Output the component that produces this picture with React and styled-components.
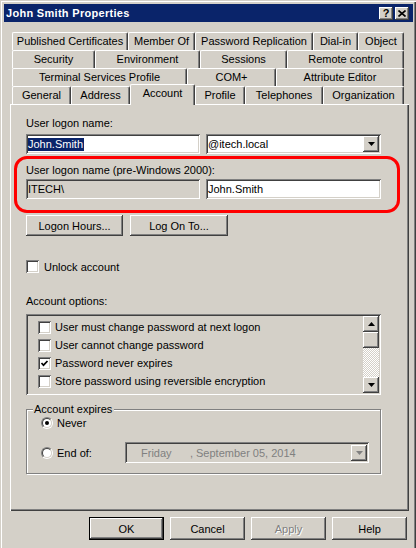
import React from 'react';
import styled, { createGlobalStyle, css } from 'styled-components';

const GlobalStyle = createGlobalStyle`
  html, body {
    margin: 0;
    padding: 0;
    background: #d4d0c8;
  }
  body {
    font-family: "Liberation Sans", Arial, sans-serif;
    font-size: 11px;
    color: #000;
  }
`;

const raised = css`
  box-shadow: inset -1px -1px #404040, inset 1px 1px #fff, inset -2px -2px #808080, inset 2px 2px #d4d0c8;
`;

const sunken = css`
  box-shadow: inset 1px 1px #808080, inset -1px -1px #fff, inset 2px 2px #404040, inset -2px -2px #d4d0c8;
`;

const Window = styled.div`
  width: 416px;
  height: 548px;
  overflow: hidden;
  box-sizing: border-box;
  padding: 1px 0 0 1px;
`;

const Frame = styled.div`
  height: 100%;
  box-sizing: border-box;
  padding: 3px 3px 0 3px;
  box-shadow: inset 1px 1px #fff, inset -1px 0 #404040, inset -2px 0 #808080;
`;

const TitleBar = styled.div`
  height: 18px;
  background: #0a246a;
  display: flex;
  align-items: center;
  padding: 0 4px 0 2px;
  color: #fff;
  font-weight: bold;
  letter-spacing: 0.3px;
`;

const TitleText = styled.span`
  flex: 1;
`;

const CaptionButton = styled.div`
  width: 14px;
  height: 13px;
  margin-left: 2px;
  background: #d4d0c8;
  ${raised};
  display: flex;
  align-items: center;
  justify-content: center;
  color: #000;
  font-size: 11px;
  font-weight: bold;
  letter-spacing: 0;
  line-height: 1;
`;

const Body = styled.div`
  padding: 10px 0 0 6px;
`;

const TabStrip = styled.div`
  margin-left: 2px;
  width: 392px;
`;

const TabRow = styled.div`
  display: flex;
  height: 18px;
  align-items: flex-start;
`;

const Tab = styled.div`
  box-sizing: border-box;
  height: ${(p) => (p.$active ? '21px' : '18px')};
  margin-top: ${(p) => (p.$active ? '-2px' : '0')};
  position: ${(p) => (p.$active ? 'relative' : 'static')};
  z-index: ${(p) => (p.$active ? 2 : 'auto')};
  background: #d4d0c8;
  border-top: 1px solid #fff;
  border-left: 1px solid #fff;
  border-right: 1px solid #404040;
  border-radius: 2px 2px 0 0;
  box-shadow: inset -1px 0 #808080;
  display: flex;
  justify-content: center;
  padding-top: 2px;
  white-space: nowrap;
`;

const Panel = styled.div`
  width: 399px;
  height: 407px;
  box-sizing: border-box;
  padding: 13px 0 0 16px;
  position: relative;
  box-shadow: inset 1px 1px #fff, inset -1px -1px #404040, inset -2px -2px #808080;
`;

const Label = styled.div`
  height: 13px;
  line-height: 13px;
  margin-top: ${(p) => p.$top || 0}px;
`;

const FieldRow = styled.div`
  display: flex;
  gap: 6px;
  margin-top: ${(p) => p.$top || 0}px;
`;

const TextBox = styled.div`
  box-sizing: border-box;
  width: ${(p) => p.$w}px;
  height: 20px;
  padding-left: 2px;
  display: flex;
  align-items: center;
  background: ${(p) => (p.$grey ? '#d4d0c8' : '#fff')};
  ${sunken};
  white-space: pre;
`;

const Highlight = styled.span`
  background: #0a246a;
  color: #fff;
  padding: 0 1px 0 0;
  line-height: 13px;
`;

const DropButton = styled.div`
  width: 16px;
  height: 16px;
  margin-left: auto;
  margin-right: 2px;
  background: #d4d0c8;
  ${raised};
  display: flex;
  align-items: center;
  justify-content: center;
`;

const Highlighted = styled.div`
  position: relative;
  width: 355px;
  margin-top: 10px;

  &::after {
    content: '';
    position: absolute;
    top: -8px;
    left: -12px;
    right: -19px;
    bottom: -14px;
    border: 3px solid #ff0000;
    border-radius: 13px;
    pointer-events: none;
  }
`;

const ButtonRow = styled.div`
  display: flex;
  gap: ${(p) => p.$gap}px;
  margin-top: ${(p) => p.$top || 0}px;
  justify-content: ${(p) => p.$justify || 'flex-start'};
  padding-right: ${(p) => p.$right || 0}px;
`;

const Button = styled.div`
  box-sizing: border-box;
  width: ${(p) => p.$w}px;
  height: ${(p) => p.$h}px;
  display: flex;
  align-items: center;
  justify-content: center;
  background: #d4d0c8;
  ${raised};
  border: ${(p) => (p.$default ? '1px solid #000' : 'none')};
  color: ${(p) => (p.$disabled ? '#808080' : '#000')};
  text-shadow: ${(p) => (p.$disabled ? '1px 1px 0 #fff' : 'none')};
`;

const CheckRow = styled.div`
  display: flex;
  align-items: center;
  gap: 5px;
  height: ${(p) => p.$h || 13}px;
  margin-top: ${(p) => p.$top || 0}px;
`;

const CheckBox = styled.div`
  width: 13px;
  height: 13px;
  flex: none;
  box-sizing: border-box;
  background: #fff;
  ${sunken};
  display: flex;
  align-items: center;
  justify-content: center;
`;

const ListBox = styled.div`
  box-sizing: border-box;
  width: 355px;
  height: 81px;
  margin-top: 6px;
  display: flex;
  background: #d4d0c8;
  ${sunken};
`;

const ListItems = styled.div`
  flex: 1;
  padding: 4px 0 0 12px;
`;

const ListItem = styled(CheckRow)`
  height: 18px;
  gap: 4px;
`;

const ScrollBar = styled.div`
  width: 16px;
  margin: 2px 2px 2px 0;
  display: flex;
  flex-direction: column;
`;

const ScrollButton = styled.div`
  height: 16px;
  flex: none;
  background: #d4d0c8;
  ${raised};
  display: flex;
  align-items: center;
  justify-content: center;
`;

const ScrollTrack = styled.div`
  flex: 1;
  background: repeating-conic-gradient(#fff 0 25%, #d4d0c8 0 50%) 0 0 / 2px 2px;
`;

const GroupBox = styled.div`
  position: relative;
  box-sizing: border-box;
  width: 355px;
  height: 65px;
  margin-top: 14px;
  padding: 6px 0 0 14px;
  border: 1px solid #808080;
  box-shadow: inset 1px 1px #fff, 1px 1px #fff;
`;

const Legend = styled.span`
  position: absolute;
  top: -7px;
  left: 6px;
  padding: 0 2px 0 1px;
  background: #d4d0c8;
  line-height: 13px;
`;

const RadioRow = styled.div`
  display: flex;
  align-items: center;
  height: ${(p) => p.$h}px;
  margin-top: ${(p) => p.$top || 0}px;
`;

const Radio = styled.span`
  width: 12px;
  height: 12px;
  flex: none;
  box-sizing: border-box;
  border-radius: 50%;
  border: 1px solid;
  border-color: #808080 #fff #fff #808080;
  display: flex;
  align-items: center;
  justify-content: center;
`;

const RadioInner = styled.span`
  width: 10px;
  height: 10px;
  box-sizing: border-box;
  border-radius: 50%;
  border: 1px solid;
  border-color: #404040 #d4d0c8 #d4d0c8 #404040;
  background: #fff;
  display: flex;
  align-items: center;
  justify-content: center;

  &::after {
    content: '';
    width: 4px;
    height: 4px;
    border-radius: 50%;
    background: ${(p) => (p.$checked ? '#000' : 'transparent')};
  }
`;

const RadioLabel = styled.span`
  margin-left: 4px;
  width: ${(p) => p.$w || 'auto'};
`;

const DatePicker = styled.div`
  box-sizing: border-box;
  width: 244px;
  height: 21px;
  display: flex;
  align-items: center;
  padding-left: 16px;
  color: #808080;
  white-space: pre;
  background: #d4d0c8;
  ${sunken};
`;

const Arrow = ({ dir = 'down', color = '#000' }) => (
  <svg width="7" height="4" viewBox="0 0 7 4">
    <polygon points={dir === 'down' ? '0,0 7,0 3.5,4' : '0,4 7,4 3.5,0'} fill={color} />
  </svg>
);

const Check = () => (
  <svg width="9" height="9" viewBox="0 0 9 9">
    <path d="M1.5 4 L3.5 6.2 L7.5 2" stroke="#000" strokeWidth="1.7" fill="none" />
  </svg>
);

const CloseGlyph = () => (
  <svg width="8" height="7" viewBox="0 0 8 7">
    <path d="M0.5 0.5 L7.5 6.5 M7.5 0.5 L0.5 6.5" stroke="#000" strokeWidth="1.6" />
  </svg>
);

const tabRows = [
  [['Published Certificates', 116], ['Member Of', 67], ['Password Replication', 118], ['Dial-in', 45], ['Object', 46]],
  [['Security', 83], ['Environment', 105], ['Sessions', 87], ['Remote control', 117]],
  [['Terminal Services Profile', 175], ['COM+', 89], ['Attribute Editor', 128]],
  [['General', 59], ['Address', 59], ['Account', 65], ['Profile', 50], ['Telephones', 78], ['Organization', 81]],
];

const options = [
  ['User must change password at next logon', false],
  ['User cannot change password', false],
  ['Password never expires', true],
  ['Store password using reversible encryption', false],
];

export default function App() {
  return (
    <>
      <GlobalStyle />
      <Window>
        <Frame>
          <TitleBar>
            <TitleText>John Smith Properties</TitleText>
            <CaptionButton>?</CaptionButton>
            <CaptionButton>
              <CloseGlyph />
            </CaptionButton>
          </TitleBar>

          <Body>
            <TabStrip>
              {tabRows.map((row, i) => (
                <TabRow key={i}>
                  {row.map(([name, w]) => (
                    <Tab key={name} $active={name === 'Account'} style={{ width: w }}>
                      {name}
                    </Tab>
                  ))}
                </TabRow>
              ))}
            </TabStrip>

            <Panel>
              <Label>User logon name:</Label>
              <FieldRow $top={4}>
                <TextBox $w={174}>
                  <Highlight>John.Smith</Highlight>
                </TextBox>
                <TextBox $w={175}>
                  @itech.local
                  <DropButton>
                    <Arrow />
                  </DropButton>
                </TextBox>
              </FieldRow>

              <Highlighted>
                <Label>User logon name (pre-Windows 2000):</Label>
                <FieldRow $top={2}>
                  <TextBox $w={174} $grey>
                    ITECH\
                  </TextBox>
                  <TextBox $w={175}>John.Smith</TextBox>
                </FieldRow>
              </Highlighted>

              <ButtonRow $top={16} $gap={7}>
                <Button $w={97} $h={21}>Logon Hours...</Button>
                <Button $w={98} $h={21}>Log On To...</Button>
              </ButtonRow>

              <CheckRow $top={24}>
                <CheckBox />
                Unlock account
              </CheckRow>

              <Label $top={22}>Account options:</Label>
              <ListBox>
                <ListItems>
                  {options.map(([text, on]) => (
                    <ListItem key={text}>
                      <CheckBox>{on && <Check />}</CheckBox>
                      {text}
                    </ListItem>
                  ))}
                </ListItems>
                <ScrollBar>
                  <ScrollButton>
                    <Arrow dir="up" />
                  </ScrollButton>
                  <ScrollButton />
                  <ScrollTrack />
                  <ScrollButton>
                    <Arrow />
                  </ScrollButton>
                </ScrollBar>
              </ListBox>

              <GroupBox>
                <Legend>Account expires</Legend>
                <RadioRow $h={14}>
                  <Radio>
                    <RadioInner $checked />
                  </Radio>
                  <RadioLabel>Never</RadioLabel>
                </RadioRow>
                <RadioRow $h={21} $top={12}>
                  <Radio>
                    <RadioInner />
                  </Radio>
                  <RadioLabel $w="68px">End of:</RadioLabel>
                  <DatePicker>
                    {'Friday      , September 05, 2014'}
                    <DropButton>
                      <Arrow color="#808080" />
                    </DropButton>
                  </DatePicker>
                </RadioRow>
              </GroupBox>
            </Panel>

            <ButtonRow $top={6} $gap={6} $justify="flex-end" $right={2} style={{ width: 399, boxSizing: 'border-box' }}>
              <Button $w={75} $h={23} $default>OK</Button>
              <Button $w={75} $h={23}>Cancel</Button>
              <Button $w={75} $h={23} $disabled>Apply</Button>
              <Button $w={75} $h={23}>Help</Button>
            </ButtonRow>
          </Body>
        </Frame>
      </Window>
    </>
  );
}
